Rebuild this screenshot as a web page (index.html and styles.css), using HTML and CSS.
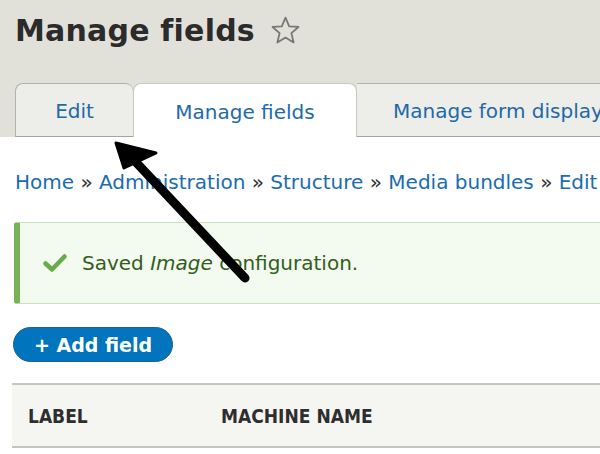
FILE: index.html
```html
<!DOCTYPE html>
<html lang="en">
<head>
    <meta charset="UTF-8">
    <meta name="viewport" content="width=device-width, initial-scale=1.0">
    <title>Manage fields</title>
    <link rel="stylesheet" href="styles.css">
</head>
<body>
    <div class="page">
        <header class="head">
            <h1 class="title">
                Manage fields
                <svg class="star" viewBox="0 0 32 32" width="33" height="33">
                    <path d="M16 3.5 L19.6 12 L28.6 12.6 L21.7 18.6 L23.9 27.6 L16 22.8 L8.1 27.6 L10.3 18.6 L3.4 12.6 L12.4 12 Z" fill="none" stroke="#777" stroke-width="1.7" stroke-linejoin="round"/>
                </svg>
            </h1>
            <nav class="tabs">
                <a class="tab">Edit</a>
                <a class="tab active">Manage fields</a>
                <a class="tab">Manage form display</a>
            </nav>
        </header>

        <div class="content">
            <div class="crumbs">
                <a>Home</a> » <a>Administration</a> » <a>Structure</a> » <a>Media bundles</a> » <a>Edit</a>
            </div>

            <div class="message">
                <svg class="check" viewBox="0 0 24 20" width="24" height="20">
                    <path d="M2.5 10.5 L9 16.5 L21.5 3.5" fill="none" stroke="#6aab4b" stroke-width="4.5" stroke-linecap="round" stroke-linejoin="round"/>
                </svg>
                <span>Saved <em>Image</em> configuration.</span>
            </div>

            <a class="btn">+ Add field</a>

            <div class="thead">
                <span class="col-label">Label</span>
                <span class="col-machine">Machine name</span>
            </div>
        </div>

        <!-- arrow over everything -->
        <svg class="arrow" width="600" height="454" viewBox="0 0 600 454">
            <line x1="245" y1="278" x2="132" y2="158" stroke="#000" stroke-width="9" stroke-linecap="round"/>
            <path d="M116 143 L156 153 L124 168 Z" fill="#000" stroke="#000" stroke-width="3" stroke-linejoin="round"/>
        </svg>
    </div>
</body>
</html>
```

FILE: styles.css
```css
*{
    margin: 0;
    padding: 0;
    box-sizing: border-box;
}
body{
    font-family: "DejaVu Sans", Verdana, sans-serif;
    background-color: #fff;
    width: 600px;
    height: 454px;
    overflow: hidden;
}
.page{
    position: relative;
    width: 600px;
    height: 454px;
    overflow: hidden;
}
.head{
    background-color: #e1e0d9;
    padding: 9px 0 0 15px;
}
.title{
    display: flex;
    align-items: center;
    gap: 14px;
    height: 42px;
    font-size: 30px;
    font-weight: bold;
    color: #2b2b2b;
    letter-spacing: 0.2px;
    white-space: nowrap;
}
.star{
    flex: none;
}
.tabs{
    display: flex;
    margin-top: 32px;
    height: 54px;
    white-space: nowrap;
}
.tab{
    flex: none;
    display: flex;
    align-items: center;
    justify-content: center;
    padding-top: 2px;
    font-size: 20px;
    color: #1e6aa8;
    background-color: #ededea;
    border: 1px solid #b2b1ab;
    border-bottom-color: #a5a49f;
    border-radius: 8px 8px 0 0;
}
.tab:nth-child(1){
    width: 118px;
    border-right: none;
}
.tab.active{
    width: 224px;
    background-color: #fff;
    border-color: #c8c7c1;
    border-bottom: none;
}
.tab:nth-child(3){
    width: 300px;
    padding-left: 36px;
    justify-content: flex-start;
    border-left: none;
    border-radius: 0 8px 0 0;
}
.content{
    padding: 33px 0 0 15px;
}
.crumbs{
    font-size: 20px;
    color: #333;
    white-space: nowrap;
}
.crumbs a{
    color: #1b6cb0;
}
.message{
    display: flex;
    align-items: center;
    gap: 15px;
    margin-top: 28px;
    margin-left: -1px;
    height: 82px;
    padding-left: 23px;
    background-color: #f3faef;
    border: 1px solid #c9e1bd;
    border-left: 6px solid #77b259;
    border-right: none;
    border-radius: 3px 0 0 3px;
    font-size: 20px;
    color: #325e1c;
    white-space: nowrap;
}
.check{
    flex: none;
}
.btn{
    display: inline-flex;
    align-items: center;
    justify-content: center;
    margin-top: 23px;
    margin-left: -2px;
    width: 160px;
    height: 35px;
    border-radius: 18px;
    background-color: #0074bd;
    border: 1px solid #1a5f95;
    color: #fff;
    font-size: 19px;
    font-weight: bold;
}
.thead{
    display: flex;
    align-items: center;
    margin-top: 21px;
    margin-left: -3px;
    height: 65px;
    background-color: #f5f5f2;
    border-top: 2px solid #c4c4c0;
    border-bottom: 2px solid #c4c4c0;
    font-family: "DejaVu Sans Condensed", "DejaVu Sans", sans-serif;
    font-size: 19px;
    font-weight: bold;
    text-transform: uppercase;
    color: #2e2e2e;
}
.col-label{
    width: 209px;
    padding-left: 16px;
}
.arrow{
    position: absolute;
    left: 0;
    top: 0;
    pointer-events: none;
}
```
